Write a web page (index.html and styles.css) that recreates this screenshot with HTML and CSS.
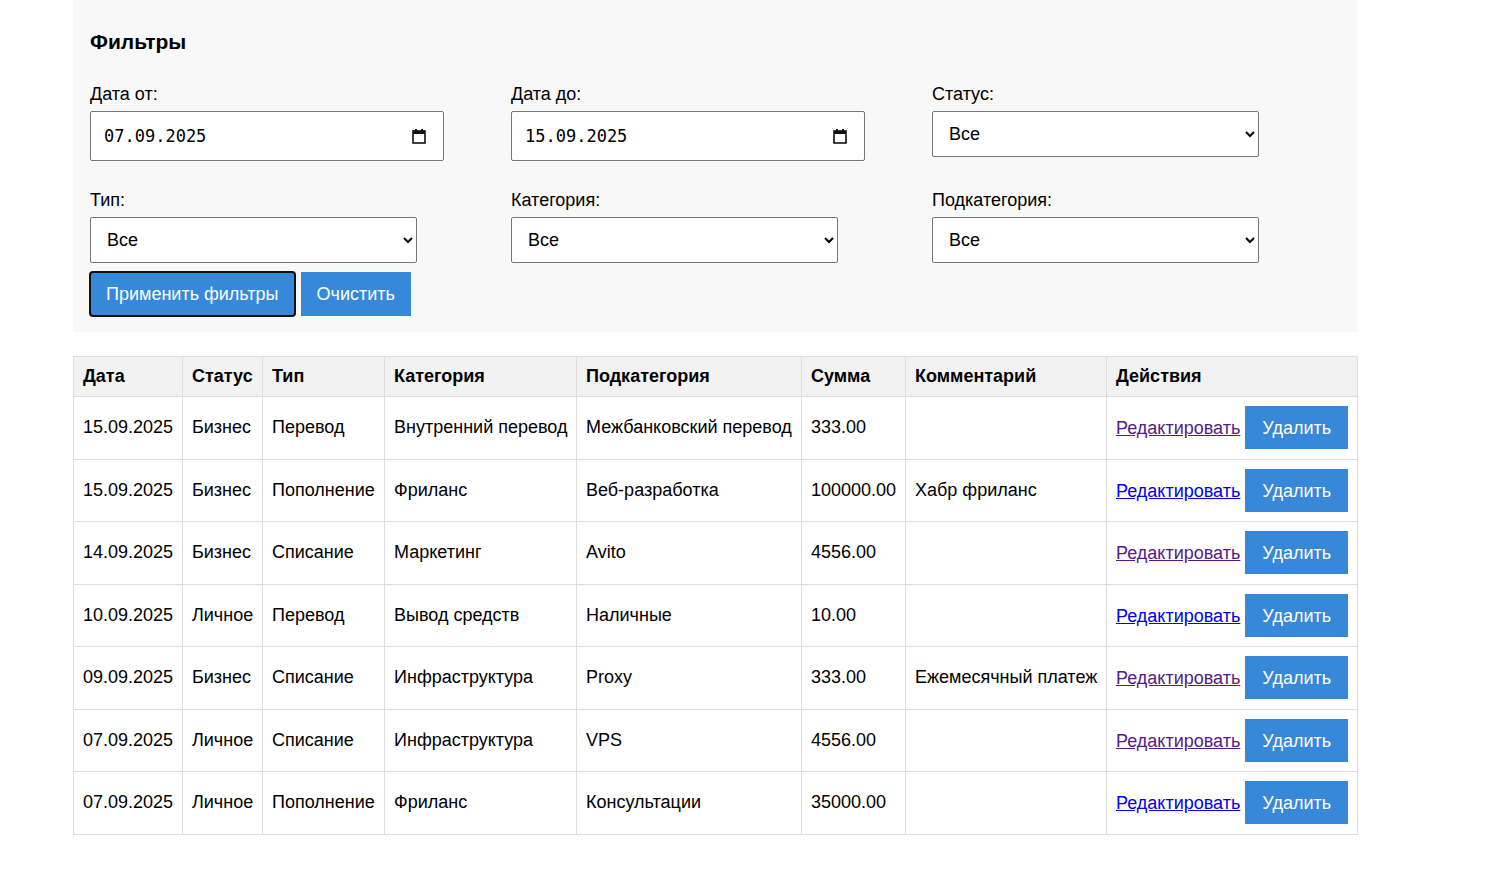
FILE: index.html
```html
<!DOCTYPE html>
<html lang="ru">
<head>
<meta charset="utf-8">
<title>Операции</title>
<link rel="stylesheet" href="styles.css">
</head>
<body>
<main class="page">
  <section class="filters">
    <h3 class="filters-title">Фильтры</h3>
    <div class="filters-grid">
      <div class="field">
        <label class="field-label">Дата от:</label>
        <div class="date-field">
          <input class="date-input" type="text" value="07.09.2025" readonly>
          <svg class="cal-icon" width="14" height="15" viewBox="0 0 14 15"><path d="M3 0h2v2H3zM9 0h2v2H9z" fill="#111"/><rect x="1" y="2" width="12" height="12" fill="none" stroke="#111" stroke-width="1.6"/><rect x="1" y="2" width="12" height="3" fill="#111"/></svg>
        </div>
      </div>
      <div class="field">
        <label class="field-label">Дата до:</label>
        <div class="date-field">
          <input class="date-input" type="text" value="15.09.2025" readonly>
          <svg class="cal-icon" width="14" height="15" viewBox="0 0 14 15"><path d="M3 0h2v2H3zM9 0h2v2H9z" fill="#111"/><rect x="1" y="2" width="12" height="12" fill="none" stroke="#111" stroke-width="1.6"/><rect x="1" y="2" width="12" height="3" fill="#111"/></svg>
        </div>
      </div>
      <div class="field">
        <label class="field-label">Статус:</label>
        <select class="select"><option>Все</option></select>
      </div>
      <div class="field">
        <label class="field-label">Тип:</label>
        <select class="select"><option>Все</option></select>
      </div>
      <div class="field">
        <label class="field-label">Категория:</label>
        <select class="select"><option>Все</option></select>
      </div>
      <div class="field">
        <label class="field-label">Подкатегория:</label>
        <select class="select"><option>Все</option></select>
      </div>
    </div>
    <div class="filter-actions">
      <button class="btn btn-focused">Применить фильтры</button>
      <button class="btn">Очистить</button>
    </div>
  </section>

  <table class="ops">
    <colgroup>
      <col class="c-date"><col class="c-status"><col class="c-type"><col class="c-cat"><col class="c-sub"><col class="c-sum"><col class="c-comm"><col class="c-act">
    </colgroup>
    <thead>
      <tr><th>Дата</th><th>Статус</th><th>Тип</th><th>Категория</th><th>Подкатегория</th><th>Сумма</th><th>Комментарий</th><th>Действия</th></tr>
    </thead>
    <tbody>
      <tr><td>15.09.2025</td><td>Бизнес</td><td>Перевод</td><td>Внутренний перевод</td><td>Межбанковский перевод</td><td>333.00</td><td></td><td><a class="edit visited" href="#">Редактировать</a> <button class="btn">Удалить</button></td></tr>
      <tr><td>15.09.2025</td><td>Бизнес</td><td>Пополнение</td><td>Фриланс</td><td>Веб-разработка</td><td>100000.00</td><td>Хабр фриланс</td><td><a class="edit" href="#">Редактировать</a> <button class="btn">Удалить</button></td></tr>
      <tr><td>14.09.2025</td><td>Бизнес</td><td>Списание</td><td>Маркетинг</td><td>Avito</td><td>4556.00</td><td></td><td><a class="edit visited" href="#">Редактировать</a> <button class="btn">Удалить</button></td></tr>
      <tr><td>10.09.2025</td><td>Личное</td><td>Перевод</td><td>Вывод средств</td><td>Наличные</td><td>10.00</td><td></td><td><a class="edit" href="#">Редактировать</a> <button class="btn">Удалить</button></td></tr>
      <tr><td>09.09.2025</td><td>Бизнес</td><td>Списание</td><td>Инфраструктура</td><td>Proxy</td><td>333.00</td><td>Ежемесячный платеж</td><td><a class="edit visited" href="#">Редактировать</a> <button class="btn">Удалить</button></td></tr>
      <tr><td>07.09.2025</td><td>Личное</td><td>Списание</td><td>Инфраструктура</td><td>VPS</td><td>4556.00</td><td></td><td><a class="edit visited" href="#">Редактировать</a> <button class="btn">Удалить</button></td></tr>
      <tr><td>07.09.2025</td><td>Личное</td><td>Пополнение</td><td>Фриланс</td><td>Консультации</td><td>35000.00</td><td></td><td><a class="edit" href="#">Редактировать</a> <button class="btn">Удалить</button></td></tr>
    </tbody>
  </table>
</main>
</body>
</html>
```

FILE: styles.css
```css
* { box-sizing: border-box; }

html, body {
  margin: 0;
  padding: 0;
  background: #fff;
}

body {
  font-family: "Liberation Sans", Arial, sans-serif;
  font-size: 18px;
  color: #000;
}

.page {
  width: 1284px;
  margin-left: 73px;
}

.filters {
  background: #f8f8f8;
  padding: 30px 17px 16px 17px;
}

.filters-title {
  margin: 0 0 30px 0;
  font-size: 21px;
  line-height: 24px;
  font-weight: bold;
}

.filters-grid {
  display: grid;
  grid-template-columns: repeat(3, 1fr);
  column-gap: 13px;
  row-gap: 29px;
  align-items: start;
}

.field {
  display: flex;
  flex-direction: column;
  align-items: flex-start;
}

.field-label {
  display: block;
  line-height: 21px;
  margin-bottom: 6px;
}

.date-field {
  width: 354px;
  height: 50px;
  background: #fff;
  border: 1px solid #767676;
  border-radius: 2px;
  display: flex;
  align-items: center;
  padding: 0 17px 0 13px;
}

.date-input {
  flex: 1;
  min-width: 0;
  border: 0;
  outline: 0;
  background: transparent;
  padding: 0;
  font-family: "DejaVu Sans Mono", "Liberation Mono", monospace;
  font-size: 17px;
  color: #000;
}

.cal-icon {
  display: block;
  flex: none;
}

.select {
  width: 327px;
  height: 46px;
  background: #fff;
  border: 1px solid #767676;
  border-radius: 2px;
  padding: 0 8px 0 12px;
  font-family: "Liberation Sans", Arial, sans-serif;
  font-size: 18px;
  color: #000;
}

.filter-actions {
  display: flex;
  gap: 6px;
  margin-top: 9px;
}

.btn {
  background: #3788d8;
  color: #fff;
  border: 0;
  border-radius: 0;
  padding: 11px 16px;
  font-family: "Liberation Sans", Arial, sans-serif;
  font-size: 18px;
  line-height: 22px;
  cursor: pointer;
}

.btn-focused {
  border-radius: 3px;
  outline: 2px solid #111;
  outline-offset: -1px;
}

.ops {
  width: 1284px;
  margin-top: 24px;
  border-collapse: collapse;
  table-layout: fixed;
}

.c-date { width: 109px; }
.c-status { width: 80px; }
.c-type { width: 122px; }
.c-cat { width: 192px; }
.c-sub { width: 225px; }
.c-sum { width: 104px; }
.c-comm { width: 201px; }
.c-act { width: 251px; }

.ops th,
.ops td {
  border: 1px solid #ddd;
  padding: 9px;
  text-align: left;
  line-height: 21px;
  white-space: nowrap;
  vertical-align: middle;
}

.ops td {
  padding-top: 9.25px;
  padding-bottom: 9.25px;
}

.ops th {
  background: #f2f2f2;
  font-weight: bold;
}

.ops td .btn {
  padding: 11px 17px 10px;
}

.edit {
  color: #0000ee;
  text-decoration: underline;
}

.edit.visited {
  color: #551a8b;
}
```
